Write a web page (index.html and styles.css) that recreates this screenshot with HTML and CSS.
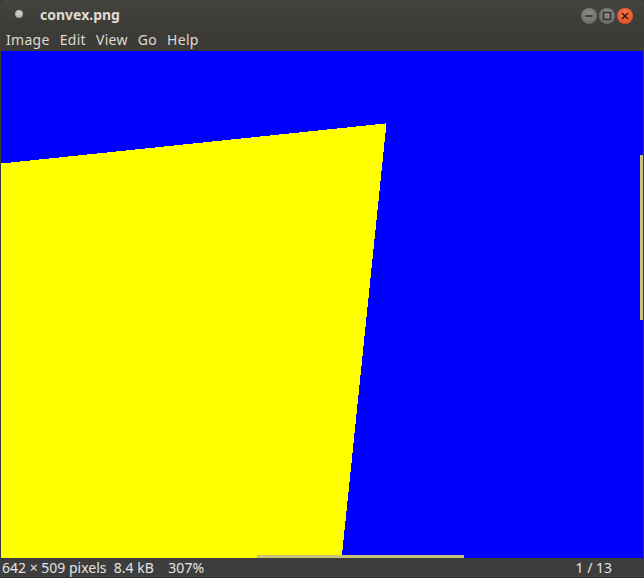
FILE: index.html
```html
<!DOCTYPE html>
<html>
<head>
<meta charset="utf-8">
<link rel="stylesheet" href="styles.css">
</head>
<body>
<div class="window">
  <div class="titlebar">
    <span class="app-icon"></span>
    <span class="title">convex.png</span>
    <div class="controls">
      <span class="btn btn-min"><svg width="16" height="16" viewBox="0 0 16 16"><line x1="4.5" y1="8" x2="11.5" y2="8" stroke="#2e2d2a" stroke-width="1.6"/></svg></span>
      <span class="btn btn-max"><svg width="16" height="16" viewBox="0 0 16 16"><rect x="4.5" y="4.5" width="7" height="7" fill="none" stroke="#2e2d2a" stroke-width="1.4"/></svg></span>
      <span class="btn btn-close"><svg width="16" height="16" viewBox="0 0 16 16"><path d="M5 5 L11 11 M11 5 L5 11" stroke="#3a1a10" stroke-width="1.6"/></svg></span>
    </div>
  </div>
  <div class="menubar">
    <span class="menu">Image</span>
    <span class="menu">Edit</span>
    <span class="menu">View</span>
    <span class="menu">Go</span>
    <span class="menu">Help</span>
  </div>
  <div class="viewport">
    <svg class="canvas" width="642" height="508" viewBox="0 0 642 508" shape-rendering="crispEdges">
      <rect x="0" y="0" width="642" height="508" fill="#0000ff"/>
      <path fill="#ffff00" d="M0 112
        h9.6v-1h9.6v-1h9.6v-1h9.6v-1h9.6v-1h9.6v-1h9.6v-1h9.6v-1h9.6v-1h9.6v-1
        h9.6v-1h9.6v-1h9.6v-1h9.6v-1h9.6v-1h9.6v-1h9.6v-1h9.6v-1h9.6v-1h9.6v-1
        h9.6v-1h9.6v-1h9.6v-1h9.6v-1h9.6v-1h9.6v-1h9.6v-1h9.6v-1h9.6v-1h9.6v-1
        h9.6v-1h9.6v-1h9.6v-1h9.6v-1h9.6v-1h9.6v-1h9.6v-1h9.6v-1h9.6v-1h9.6v-1
        h1
        v9.7h-1v9.7h-1v9.7h-1v9.7h-1v9.7h-1v9.7h-1v9.7h-1v9.7h-1v9.7h-1v9.7h-1
        v9.7h-1v9.7h-1v9.7h-1v9.7h-1v9.7h-1v9.7h-1v9.7h-1v9.7h-1v9.7h-1v9.7h-1
        v9.7h-1v9.7h-1v9.7h-1v9.7h-1v9.7h-1v9.7h-1v9.7h-1v9.7h-1v9.7h-1v9.7h-1
        v9.7h-1v9.7h-1v9.7h-1v9.7h-1v9.7h-1v9.7h-1v9.7h-1v9.7h-1v9.7h-1v9.7h-1
        v9.7h-1v9.7h-1v9.7h-1v9.7h-1v9.7h-1
        L340 508 L0 508 Z"/>
    </svg>
    <div class="vscroll"></div>
    <div class="hscroll"></div>
  </div>
  <div class="statusbar">
    <span class="status-left">642 × 509 pixels&nbsp;&nbsp;8.4 kB&nbsp;&nbsp;&nbsp;&nbsp;307%</span>
    <span class="status-right">1 / 13</span>
  </div>
</div>
</body>
</html>
```
FILE: styles.css
```css
html, body {
  margin: 0;
  padding: 0;
  background: #3c3b37;
}
.window {
  width: 644px;
  height: 578px;
  display: flex;
  flex-direction: column;
  font-family: "Noto Sans", "DejaVu Sans", sans-serif;
  overflow: hidden;
}
.titlebar {
  height: 28px;
  flex: none;
  display: flex;
  align-items: center;
  background: linear-gradient(#45443f, #3c3b37);
  border-radius: 5px 5px 0 0;
  position: relative;
}
.app-icon {
  width: 8px;
  height: 8px;
  border-radius: 50%;
  background: radial-gradient(circle at 50% 40%, #d8d6d0 0, #bdbbb5 50%, #8a8884 100%);
  margin-left: 15px;
}
.title {
  color: #dfdbd2;
  font-weight: bold;
  font-size: 14px;
  margin-left: 17px;
}
.controls {
  margin-left: auto;
  margin-right: 11px;
  display: flex;
  gap: 2px;
  margin-top: 3px;
}
.btn {
  width: 16px;
  height: 16px;
  border-radius: 50%;
  display: flex;
}
.btn-min, .btn-max {
  background: radial-gradient(circle at 50% 35%, #8c8b86 0, #74736e 60%, #5e5d59 100%);
}
.btn-close {
  background: radial-gradient(circle at 50% 35%, #f47a4a 0, #e8582b 60%, #c9461c 100%);
}
.menubar {
  height: 23px;
  flex: none;
  display: flex;
  align-items: center;
  gap: 10px;
  padding-left: 6px;
  background: #3c3b37;
}
.menu {
  color: #dfdbd2;
  font-size: 14px;
  letter-spacing: 0.3px;
}
.viewport {
  flex: 1;
  position: relative;
  border-left: 1px solid #3c3b37;
  border-right: 1px solid #3c3b37;
  overflow: hidden;
  background: #0000ff;
}
.canvas {
  display: block;
}
.vscroll {
  position: absolute;
  right: 0;
  top: 104px;
  width: 3px;
  height: 165px;
  background: #c9c07a;
}
.hscroll {
  position: absolute;
  left: 256px;
  bottom: 0;
  width: 207px;
  height: 3px;
  background: #c9c07a;
}
.statusbar {
  height: 19px;
  flex: none;
  display: flex;
  align-items: center;
  justify-content: space-between;
  background: #3d3d3d;
  color: #e4e4e4;
  font-size: 14px;
  padding: 0 32px 0 2px;
  border-bottom: 1px solid #2e2e2e;
}
```
